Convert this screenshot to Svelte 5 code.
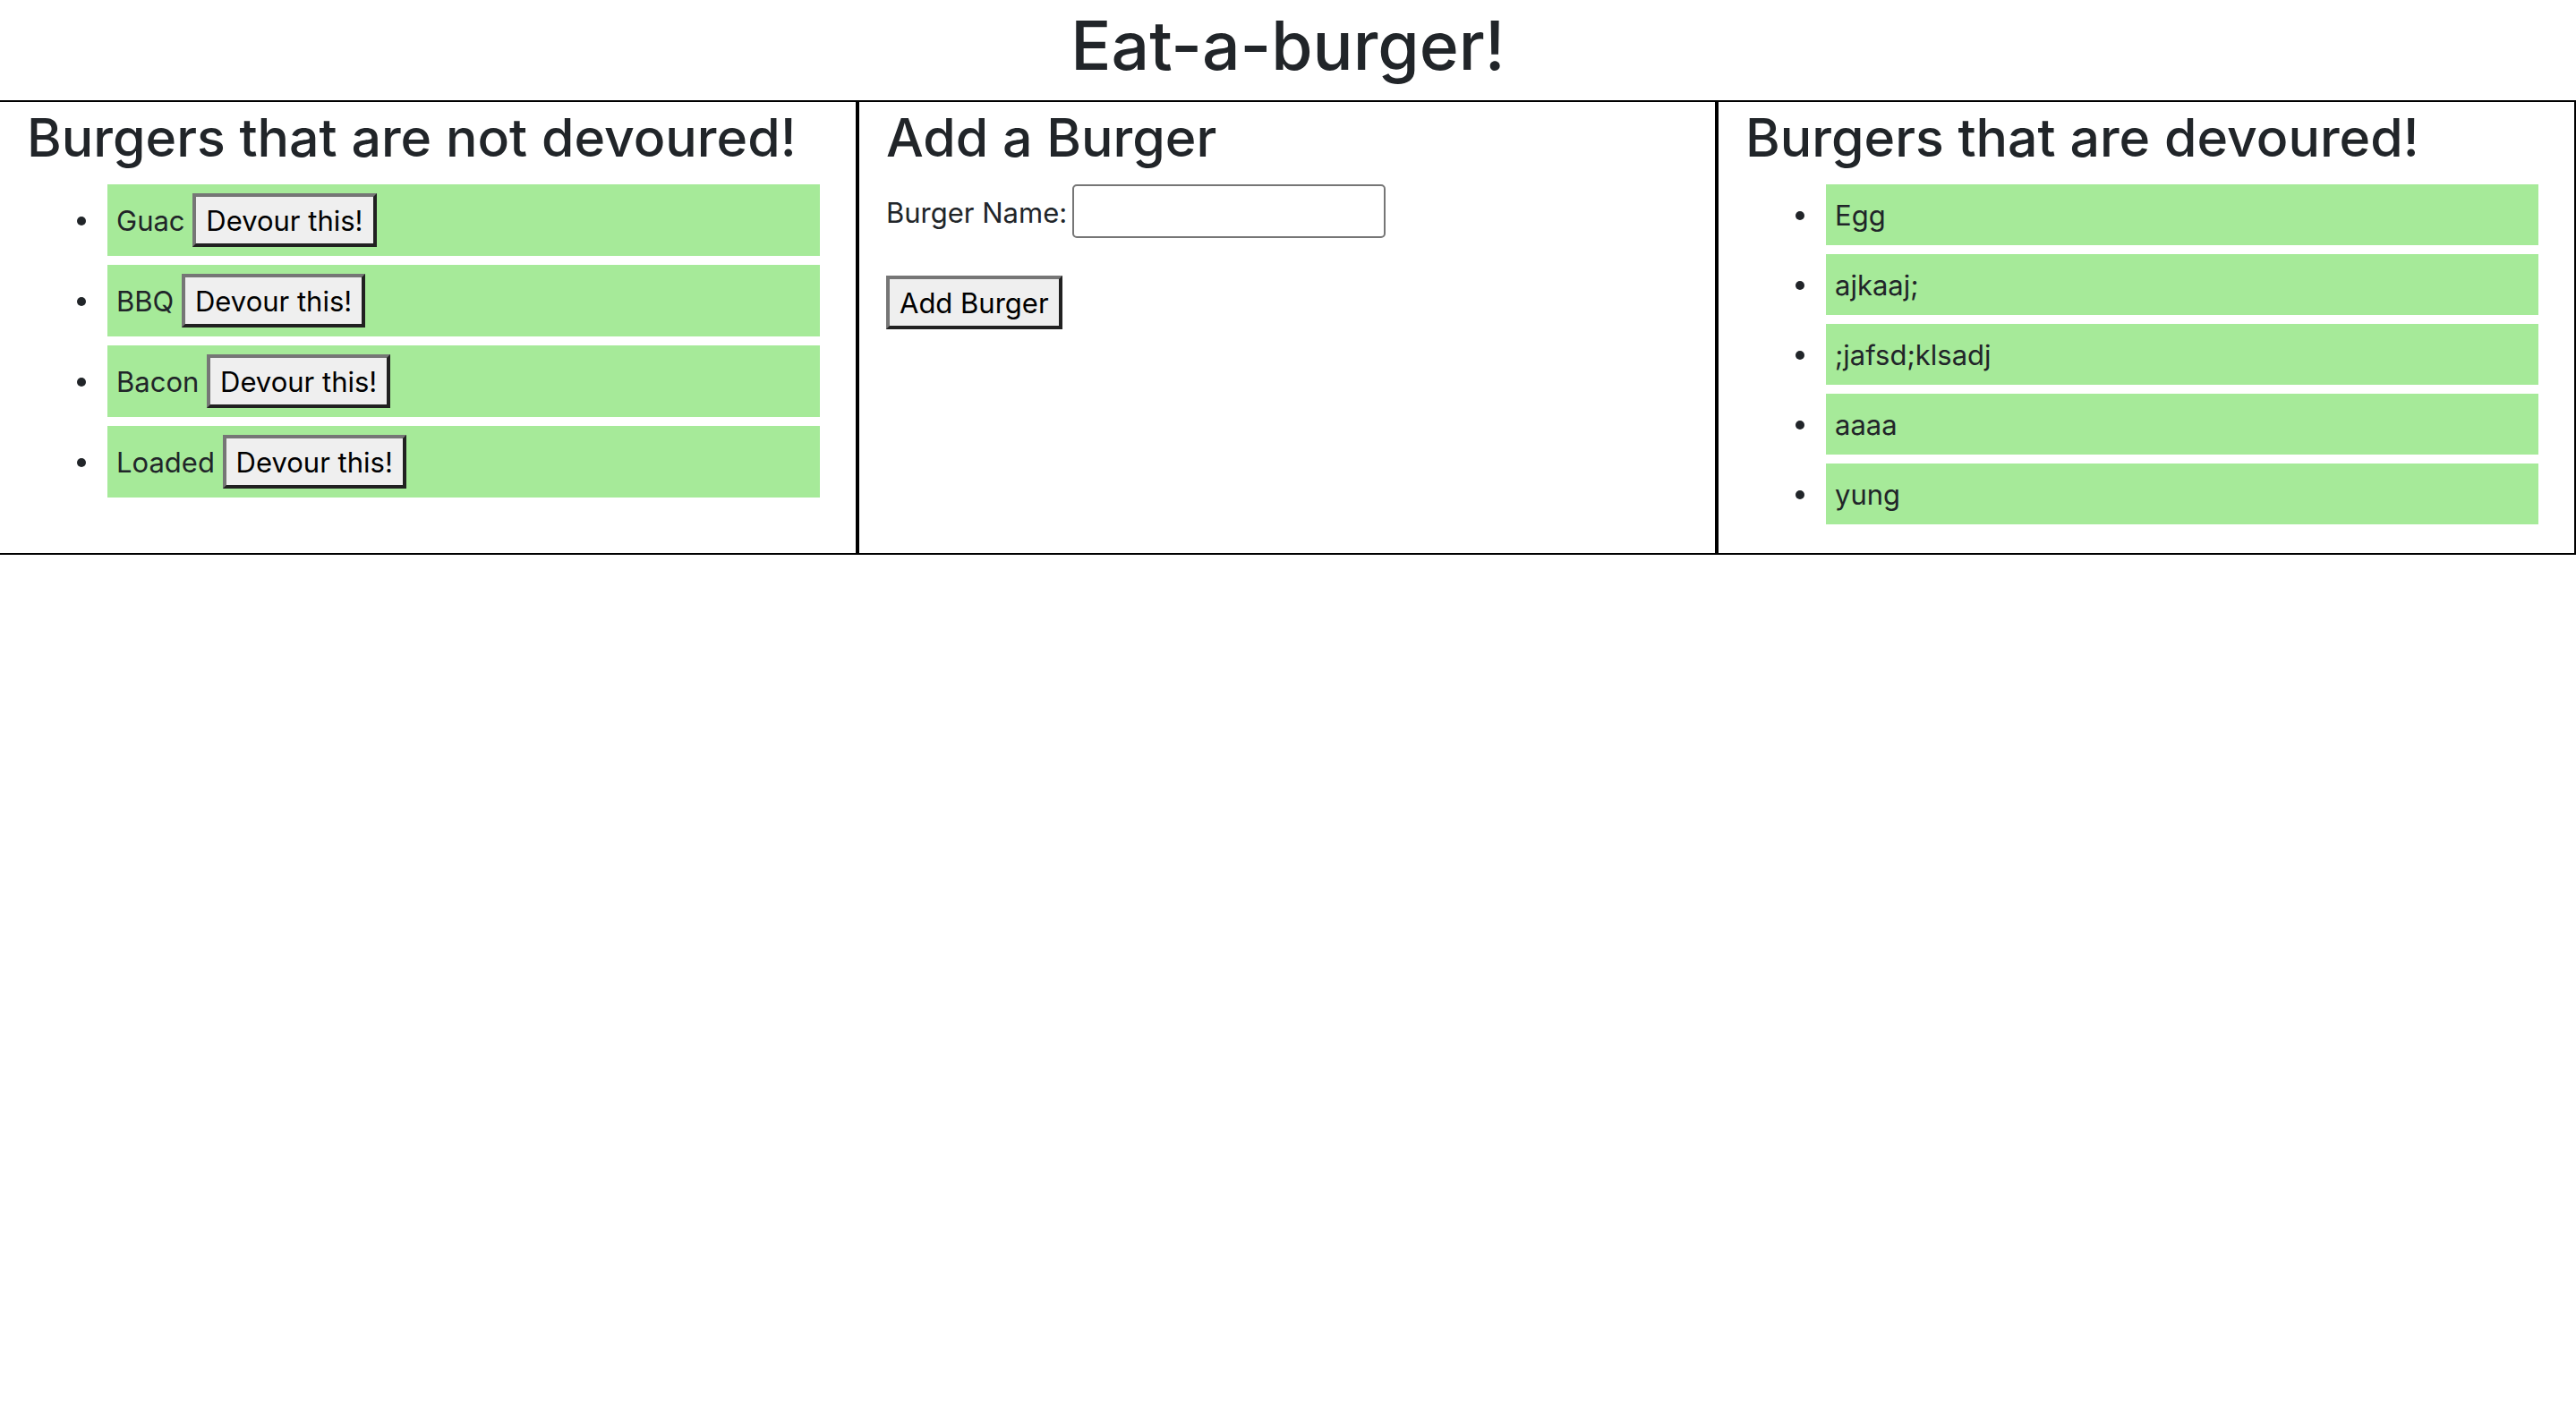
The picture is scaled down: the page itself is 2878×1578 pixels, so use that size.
<script>
  let waiting = $state(['Guac', 'BBQ', 'Bacon', 'Loaded']);
  let devoured = $state(['Egg', 'ajkaaj;', ';jafsd;klsadj', 'aaaa', 'yung']);
  let name = $state('');

  function devour(index) {
    devoured.push(waiting[index]);
    waiting.splice(index, 1);
  }

  function add(event) {
    event.preventDefault();
    if (!name.trim()) return;
    waiting.push(name.trim());
    name = '';
  }
</script>

<h1>Eat-a-burger!</h1>
<main class="row">
  <section class="col">
    <h2>Burgers that are not devoured!</h2>
    <ul>
      {#each waiting as burger, i}
        <li>{burger} <button type="button" onclick={() => devour(i)}>Devour this!</button></li>
      {/each}
    </ul>
  </section>
  <section class="col">
    <h2>Add a Burger</h2>
    <form onsubmit={add}>
      <div class="field">
        <label for="burger-name">Burger Name:</label>
        <input id="burger-name" type="text" bind:value={name} />
      </div>
      <button type="submit">Add Burger</button>
    </form>
  </section>
  <section class="col">
    <h2>Burgers that are devoured!</h2>
    <ul class="eaten">
      {#each devoured as burger}
        <li>{burger}</li>
      {/each}
    </ul>
  </section>
</main>

<style>
  :global(body) {
    margin: 0;
    background: #fff;
    color: #212529;
    font: 400 31px/48px Inter, "Liberation Sans", sans-serif;
    overflow-x: hidden;
  }
  h1,
  h2 {
    margin: 0 0 16px;
    font-weight: 500;
  }
  h1 {
    padding-top: 6px;
    font-size: 75px;
    line-height: 90px;
    text-align: center;
  }
  h2 {
    padding-top: 4px;
    font-size: 59px;
    line-height: 72px;
  }
  /* The outer left border sits just past the window edge. */
  .row {
    display: grid;
    grid-template-columns: repeat(3, minmax(0, 1fr));
    margin-left: -2px;
  }
  .col {
    border: 2px solid #000;
    padding: 0 30px;
  }
  ul {
    margin: 0 0 32px;
    padding: 0 10px 0 90px;
    display: flex;
    flex-direction: column;
    gap: 10px;
    list-style: none;
  }
  li {
    position: relative;
    padding: 10px;
    background: #a6ea99;
  }
  li::before {
    content: "";
    position: absolute;
    top: 50%;
    left: -34px;
    width: 10px;
    height: 10px;
    margin-top: -4px;
    border-radius: 50%;
    background: #212529;
  }
  .eaten li {
    padding: 11px 10px 9px;
  }
  button {
    box-sizing: border-box;
    margin: 0;
    padding: 3px 11px 1px;
    border: 4px solid;
    border-color: #767676 #212121 #212121 #767676;
    border-radius: 0;
    background: #efefef;
    color: #000;
    font: inherit;
    vertical-align: baseline;
  }
  form {
    display: flex;
    flex-direction: column;
    align-items: flex-start;
    gap: 42px;
  }
  .field {
    display: flex;
    align-items: baseline;
    gap: 6px;
  }
  input {
    box-sizing: border-box;
    width: 350px;
    height: 60px;
    padding: 4px 4px 2px;
    border: 2px solid #767676;
    border-radius: 5px;
    background: #fff;
    color: #000;
    font: inherit;
  }
</style>
